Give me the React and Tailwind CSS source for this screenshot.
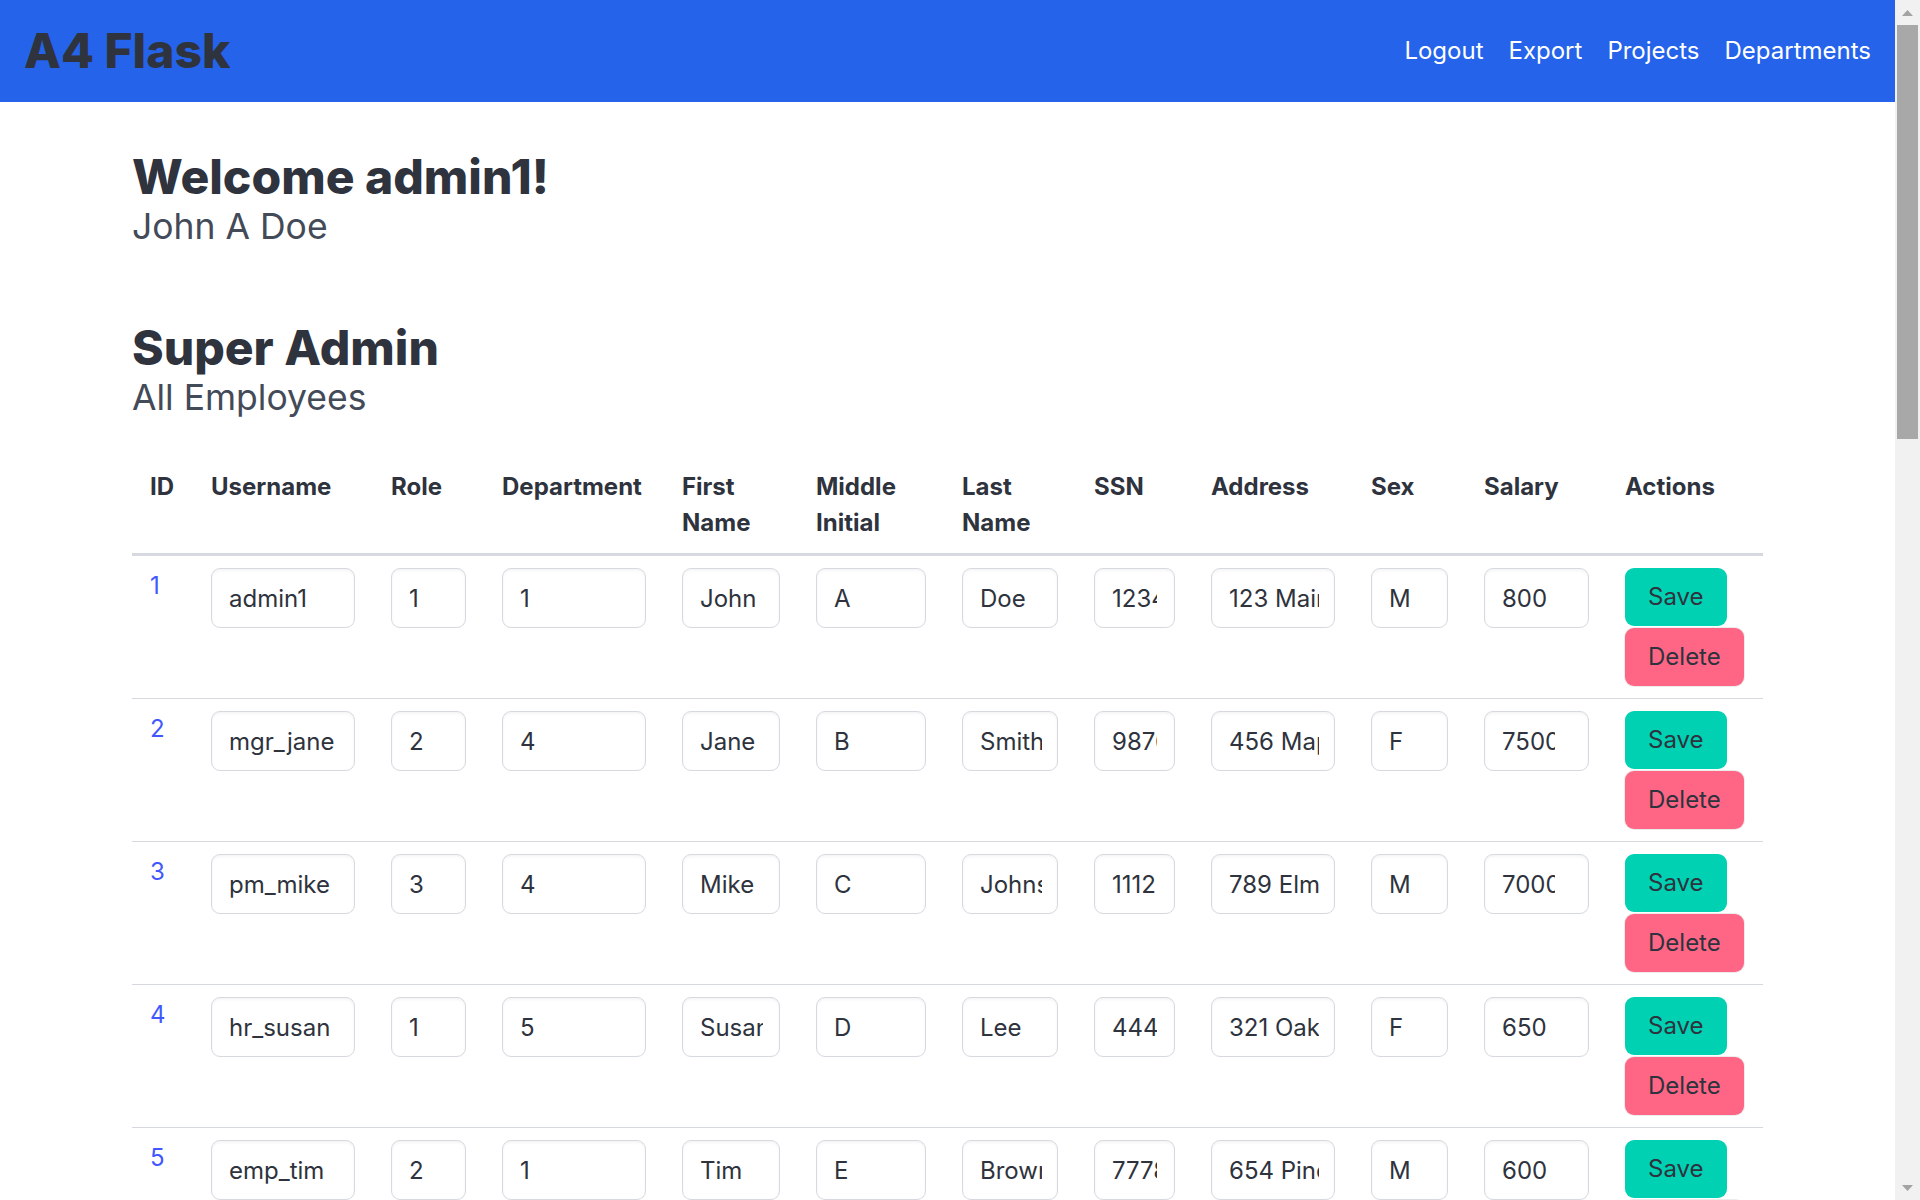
import React from "react";

const rows = [
  { id: 1, u: "admin1", r: "1", d: "1", f: "John", m: "A", l: "Doe", ssn: "123456789", a: "123 Main St", s: "M", sal: "800" },
  { id: 2, u: "mgr_jane", r: "2", d: "4", f: "Jane", m: "B", l: "Smith", ssn: "987654321", a: "456 Maple Ave", s: "F", sal: "75000" },
  { id: 3, u: "pm_mike", r: "3", d: "4", f: "Mike", m: "C", l: "Johnson", ssn: "111223333", a: "789 Elm St", s: "M", sal: "70000" },
  { id: 4, u: "hr_susan", r: "1", d: "5", f: "Susan", m: "D", l: "Lee", ssn: "444556666", a: "321 Oak St", s: "F", sal: "650" },
  { id: 5, u: "emp_tim", r: "2", d: "1", f: "Tim", m: "E", l: "Brown", ssn: "777889999", a: "654 Pine St", s: "M", sal: "600" },
];

const cols = [
  { k: "id", label: "ID", w: "w-[61px]" },
  { k: "u", label: "Username", w: "w-[180px]", pr: "pr-[16px]" },
  { k: "r", label: "Role", w: "w-[111px]", pr: "pr-[16px]" },
  { k: "d", label: "Department", w: "w-[180px]", pr: "pr-[16px]" },
  { k: "f", label: "First Name", w: "w-[134px]", pr: "pr-[16px]" },
  { k: "m", label: "Middle Initial", w: "w-[146px]", pr: "pr-[16px]" },
  { k: "l", label: "Last Name", w: "w-[132px]", pr: "pr-[15px]" },
  { k: "ssn", label: "SSN", w: "w-[117px]", pr: "pr-[17px]" },
  { k: "a", label: "Address", w: "w-[160px]", pr: "pr-[15px]" },
  { k: "s", label: "Sex", w: "w-[113px]", pr: "pr-[16px]" },
  { k: "sal", label: "Salary", w: "w-[141px]", pr: "pr-[33px]" },
  { k: "act", label: "Actions", w: "w-[156px]" },
];

function Field({ value, pr }) {
  return (
    <input
      type="text"
      defaultValue={value}
      className={`block w-full h-[60px] pl-[17px] ${pr} rounded-[9px] border border-[#d6d9e0] bg-white text-[24px] text-[#2e333d] shadow-[inset_0_1.5px_3px_rgba(10,10,10,0.05)] outline-none`}
    />
  );
}

function Scrollbar() {
  return (
    <div className="w-[25px] shrink-0 h-screen bg-[#f1f1f1] flex flex-col items-center">
      <div className="h-[25px] w-full flex items-center justify-center">
        <svg width="11" height="6" viewBox="0 0 11 6">
          <polygon points="5.5,0 11,6 0,6" fill="#a3a3a3" />
        </svg>
      </div>
      <div className="w-[21px] h-[414px] bg-[#a8a8a8]" />
      <div className="flex-1" />
      <div className="h-[25px] w-full flex items-center justify-center">
        <svg width="11" height="6" viewBox="0 0 11 6">
          <polygon points="0,0 11,0 5.5,6" fill="#a3a3a3" />
        </svg>
      </div>
    </div>
  );
}

export default function App() {
  return (
    <div className="flex h-screen overflow-hidden bg-white font-[Inter,'Noto_Sans',sans-serif] text-[#2e333d]">
      <div className="flex-1 min-w-0 h-screen overflow-hidden">
        <nav className="h-[102px] bg-[#2563eb] flex items-center justify-between pl-6 pr-6">
          <span className="text-[48px] font-extrabold leading-none text-[#2e333d]">A4 Flask</span>
          <div className="flex items-center gap-[25px] text-[24px] leading-none text-white">
            <a>Logout</a>
            <a>Export</a>
            <a>Projects</a>
            <a>Departments</a>
          </div>
        </nav>

        <main className="pl-[132px] pt-[51px]">
          <h1 className="text-[48px] leading-[48px] font-extrabold text-[#2e333d]">Welcome admin1!</h1>
          <p className="mt-[6px] text-[35.5px] leading-[40px] text-[#434a58]">John A Doe</p>

          <h2 className="mt-[77px] text-[48px] leading-[48px] font-extrabold text-[#2e333d]">Super Admin</h2>
          <p className="mt-[6px] text-[35.5px] leading-[40px] text-[#434a58]">All Employees</p>

          <table className="mt-[39px] w-[1631px] table-fixed border-collapse text-[24px] leading-[36px]">
            <thead>
              <tr>
                {cols.map((c) => (
                  <th
                    key={c.k}
                    className={`${c.w} px-[18px] py-[12px] text-left align-top font-bold text-[#2e333d] border-b-[3px] border-[#d6d9e0]`}
                  >
                    {c.label}
                  </th>
                ))}
              </tr>
            </thead>
            <tbody>
              {rows.map((row) => (
                <tr key={row.id}>
                  {cols.map((c) => {
                    if (c.k === "id") {
                      return (
                        <td key={c.k} className="px-[18px] py-[12px] align-top border-b border-[#d6d9e0] text-[#4258ff]">
                          {row.id}
                        </td>
                      );
                    }
                    if (c.k === "act") {
                      return (
                        <td key={c.k} className="px-[18px] py-[12px] align-top border-b border-[#d6d9e0]">
                          <div className="flex flex-col items-start gap-[2px]">
                            <button className="h-[58px] px-[23px] rounded-[9px] bg-[#00d1b2] text-[#2e333d] text-[24px] leading-none flex items-center justify-center">
                              Save
                            </button>
                            <button className="h-[58px] px-[23px] rounded-[9px] bg-[#ff6685] text-[#2e333d] text-[24px] leading-none flex items-center justify-center shadow-[0_0_0_1px_rgba(10,10,10,0.08)]">
                              Delete
                            </button>
                          </div>
                        </td>
                      );
                    }
                    return (
                      <td key={c.k} className="px-[18px] py-[12px] align-top border-b border-[#d6d9e0]">
                        <Field value={row[c.k]} pr={c.pr} />
                      </td>
                    );
                  })}
                </tr>
              ))}
            </tbody>
          </table>
        </main>
      </div>
      <Scrollbar />
    </div>
  );
}
